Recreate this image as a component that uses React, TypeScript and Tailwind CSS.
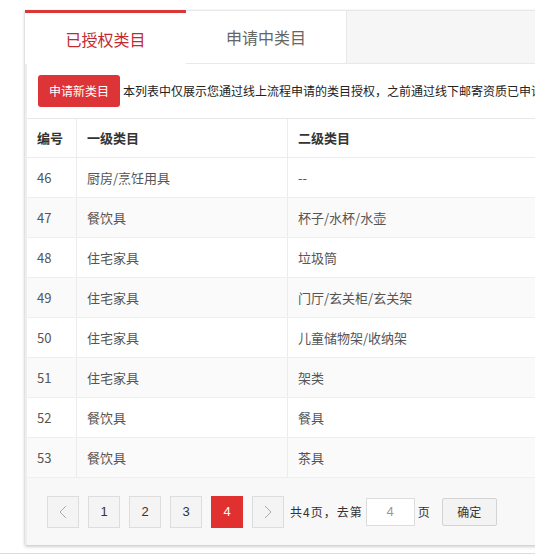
import React from "react";

const rows: [string, string, string][] = [
  ["46", "厨房/烹饪用具", "--"],
  ["47", "餐饮具", "杯子/水杯/水壶"],
  ["48", "住宅家具", "垃圾筒"],
  ["49", "住宅家具", "门厅/玄关柜/玄关架"],
  ["50", "住宅家具", "儿童储物架/收纳架"],
  ["51", "住宅家具", "架类"],
  ["52", "餐饮具", "餐具"],
  ["53", "餐饮具", "茶具"],
];

const Chevron = ({ dir }: { dir: "l" | "r" }) => (
  <svg width="8" height="14" viewBox="0 0 8 14" fill="none">
    <path
      d={dir === "l" ? "M7 1 L1 7 L7 13" : "M1 1 L7 7 L1 13"}
      stroke="#aaa"
      strokeWidth="1"
    />
  </svg>
);

export default function App() {
  return (
    <div
      className="w-[535px] h-[556px] overflow-hidden bg-white relative"
      style={{ fontFamily: '"Noto Sans CJK SC", "Liberation Sans", sans-serif' }}
    >
      <div className="h-[554px] border-b border-[#dcdcdc] bg-white pt-[10px]">
        <div className="ml-[25px] w-[720px] shadow-[0_2px_3px_rgba(0,0,0,0.18),-1px_0_2px_rgba(0,0,0,0.08)]">
          {/* Tabs */}
          <div className="flex h-[54px]">
            <div className="w-[161px] bg-white border-t-[3px] border-[#d9383b] flex items-center justify-center text-[16px] text-[#c22a2e]">
              已授权类目
            </div>
            <div className="w-[161px] bg-white border-t border-b border-r border-[#e8e8e8] flex items-center justify-center text-[16px] text-[#666]">
              申请中类目
            </div>
            <div className="flex-1 bg-[#f6f6f6] border-t border-b border-[#e8e8e8]"></div>
          </div>
          {/* Content */}
          <div className="bg-white border-l-2 border-[#eeeeee]">
            <div className="h-[54px] flex items-center pl-[11px] gap-[3px]">
              <div className="h-[32px] w-[82px] rounded-[3px] bg-[#dd3437] text-white text-[12px] flex items-center justify-center">
                申请新类目
              </div>
              <div className="text-[12px] text-[#222] whitespace-nowrap">
                本列表中仅展示您通过线上流程申请的类目授权，之前通过线下邮寄资质已申请的类目不在此列表中展示
              </div>
            </div>
            <div className="border-t border-[#e8e8e8]">
              <div className="flex h-[39px] border-b border-[#ececec] text-[13px] font-semibold text-[#333]">
                <div className="w-[50px] pl-[10px] flex items-center border-r border-[#ececec]">编号</div>
                <div className="w-[211px] pl-[10px] flex items-center border-r border-[#ececec]">一级类目</div>
                <div className="w-[260px] pl-[10px] flex items-center border-r border-[#ececec]">二级类目</div>
                <div className="flex-1"></div>
              </div>
              {rows.map((r, i) => (
                <div
                  key={r[0]}
                  className={
                    "flex h-[40px] border-b border-[#efefef] text-[13px] text-[#555] " +
                    (i % 2 === 1 ? "bg-[#fafafa]" : "bg-white")
                  }
                >
                  <div className="w-[50px] pl-[10px] flex items-center border-r border-[#ececec]">{r[0]}</div>
                  <div className="w-[211px] pl-[10px] flex items-center border-r border-[#ececec]">{r[1]}</div>
                  <div className="w-[260px] pl-[10px] flex items-center border-r border-[#ececec]">{r[2]}</div>
                  <div className="flex-1"></div>
                </div>
              ))}
            </div>
            {/* Pagination */}
            <div className="h-[67px] bg-[#f8f8f8] flex items-center pl-[20px] text-[12px] text-[#333]">
              <div className="flex gap-[9px]">
                <div className="w-[32px] h-[32px] border border-[#dddddd] bg-[#f4f4f4] flex items-center justify-center">
                  <Chevron dir="l" />
                </div>
                {["1", "2", "3"].map((n) => (
                  <div
                    key={n}
                    className="w-[32px] h-[32px] border border-[#dddddd] bg-[#f4f4f4] flex items-center justify-center text-[13px] text-[#333]"
                    style={{ fontFamily: '"Liberation Sans", sans-serif' }}
                  >
                    {n}
                  </div>
                ))}
                <div
                  className="w-[32px] h-[32px] bg-[#e0302f] flex items-center justify-center text-[13px] text-white"
                  style={{ fontFamily: '"Liberation Sans", sans-serif' }}
                >
                  4
                </div>
                <div className="w-[32px] h-[32px] border border-[#dddddd] bg-[#f4f4f4] flex items-center justify-center">
                  <Chevron dir="r" />
                </div>
              </div>
              <span className="ml-[6px] tracking-[1px]">共4页，去第</span>
              <div
                className="ml-[3px] w-[49px] h-[28px] border border-[#dddddd] bg-white flex items-center justify-center text-[13px] text-[#999]"
                style={{ fontFamily: '"Liberation Sans", sans-serif' }}
              >
                4
              </div>
              <span className="ml-[3px]">页</span>
              <div className="ml-[12px] w-[55px] h-[28px] border border-[#d4d4d4] rounded-[2px] bg-[#f3f3f3] flex items-center justify-center text-[12px] text-[#333]">
                确定
              </div>
            </div>
          </div>
        </div>
      </div>
    </div>
  );
}
